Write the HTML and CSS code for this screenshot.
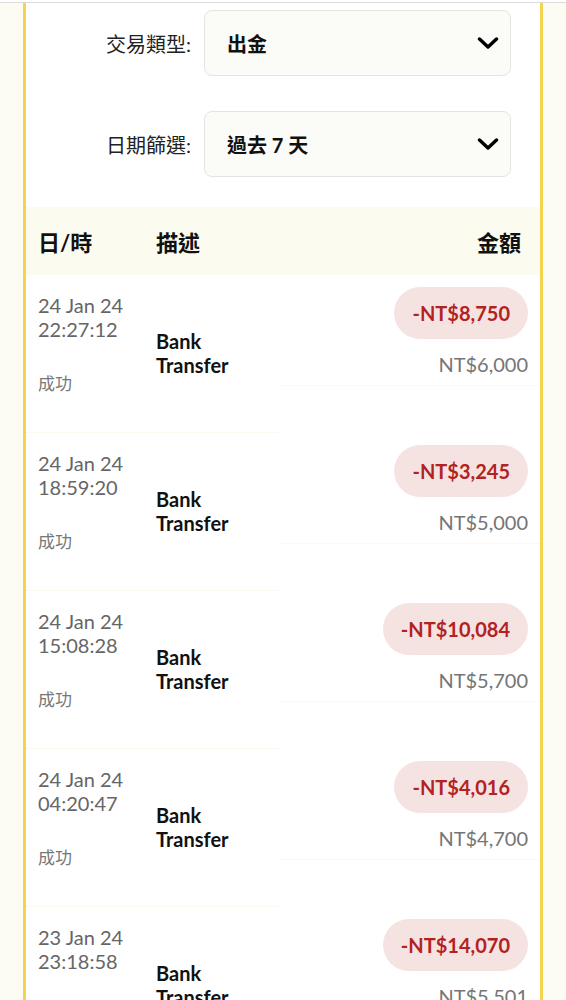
FILE: index.html
```html
<!DOCTYPE html>
<html lang="zh-Hant">
<head>
<meta charset="utf-8">
<title>交易紀錄</title>
<link rel="stylesheet" href="styles.css">
</head>
<body>
<div class="topbar"></div>
<main class="card">
  <section class="filters">
    <div class="filter">
      <label class="filter-label">交易類型:</label>
      <div class="select">
        <span class="select-value">出金</span>
        <svg class="chev" width="22" height="12" viewBox="0 0 22 12"><path d="M2.5 2 L11 10 L19.5 2" fill="none" stroke="#000" stroke-width="3.4" stroke-linecap="round" stroke-linejoin="round"/></svg>
      </div>
    </div>
    <div class="filter">
      <label class="filter-label">日期篩選:</label>
      <div class="select">
        <span class="select-value">過去 7 天</span>
        <svg class="chev" width="22" height="12" viewBox="0 0 22 12"><path d="M2.5 2 L11 10 L19.5 2" fill="none" stroke="#000" stroke-width="3.4" stroke-linecap="round" stroke-linejoin="round"/></svg>
      </div>
    </div>
  </section>

  <div class="thead">
    <span class="th th-date">日/時</span>
    <span class="th th-desc">描述</span>
    <span class="th th-amt">金額</span>
  </div>

  <div class="row">
    <div class="c-date"><div class="dt">24 Jan 24<br>22:27:12</div><div class="status">成功</div></div>
    <div class="c-desc">Bank<br>Transfer</div>
    <div class="c-amt"><span class="badge">-NT$8,750</span><span class="bal">NT$6,000</span></div>
  </div>
  <div class="row">
    <div class="c-date"><div class="dt">24 Jan 24<br>18:59:20</div><div class="status">成功</div></div>
    <div class="c-desc">Bank<br>Transfer</div>
    <div class="c-amt"><span class="badge">-NT$3,245</span><span class="bal">NT$5,000</span></div>
  </div>
  <div class="row">
    <div class="c-date"><div class="dt">24 Jan 24<br>15:08:28</div><div class="status">成功</div></div>
    <div class="c-desc">Bank<br>Transfer</div>
    <div class="c-amt"><span class="badge">-NT$10,084</span><span class="bal">NT$5,700</span></div>
  </div>
  <div class="row">
    <div class="c-date"><div class="dt">24 Jan 24<br>04:20:47</div><div class="status">成功</div></div>
    <div class="c-desc">Bank<br>Transfer</div>
    <div class="c-amt"><span class="badge">-NT$4,016</span><span class="bal">NT$4,700</span></div>
  </div>
  <div class="row">
    <div class="c-date"><div class="dt">23 Jan 24<br>23:18:58</div><div class="status">成功</div></div>
    <div class="c-desc">Bank<br>Transfer</div>
    <div class="c-amt"><span class="badge">-NT$14,070</span><span class="bal">NT$5,501</span></div>
  </div>
</main>
</body>
</html>
```

FILE: styles.css
```css
* { box-sizing: border-box; }

html, body {
  margin: 0;
  padding: 0;
}

body {
  background: #fdfcf2;
  font-family: Lato, "Noto Sans CJK TC", sans-serif;
  color: #111;
  overflow: hidden;
}

.topbar {
  height: 3px;
  background: #ffffff;
  border-bottom: 1px solid #dcdcdc;
}

.card {
  margin: 0 23px;
  background: #ffffff;
  border-left: 3px solid #f6d34c;
  border-right: 3px solid #f6d34c;
  padding-top: 7px;
}

.filters {
  display: flex;
  flex-direction: column;
  gap: 35px;
  margin-bottom: 30px;
}

.filter {
  display: flex;
  align-items: center;
}

.filter-label {
  width: 165px;
  text-align: right;
  font-size: 20px;
  color: #222;
  margin-right: 13px;
}

.select {
  width: 307px;
  height: 66px;
  border: 1px solid #e4e4e0;
  border-radius: 8px;
  background: #fbfbf7;
  display: flex;
  align-items: center;
  justify-content: space-between;
  padding: 0 11px 0 22px;
}

.select-value {
  font-size: 20px;
  font-weight: 700;
  color: #111;
}

.chev { display: block; }

.thead {
  height: 68px;
  background: #fcfbef;
  display: grid;
  grid-template-columns: 130px 124px 1fr;
  align-items: center;
}

.th {
  font-size: 22px;
  font-weight: 700;
  color: #111;
}

.th-date { padding-left: 12px; }
.th-amt { text-align: right; padding-right: 19px; }

.row {
  display: grid;
  grid-template-columns: 130px 124px 1fr;
}

.c-date {
  padding: 18px 0 36px 12px;
  border-bottom: 1px solid #fcfaee;
}

.dt {
  font-size: 20px;
  line-height: 24px;
  color: #666;
}

.status {
  margin-top: 31px;
  font-size: 17px;
  line-height: 24px;
  color: #777;
}

.c-desc {
  display: flex;
  align-items: center;
  padding-bottom: 1px;
  font-size: 20px;
  line-height: 24px;
  font-weight: 700;
  color: #111;
  border-bottom: 1px solid #fcfaee;
}

.c-amt {
  align-self: start;
  display: flex;
  flex-direction: column;
  align-items: flex-end;
  padding: 12px 12px 9px 0;
  border-bottom: 1px solid #fcfaee;
}

.badge {
  display: inline-block;
  padding: 14px 18px;
  line-height: 24px;
  border-radius: 26px;
  background: #f5e3e2;
  color: #b2221f;
  font-size: 20px;
  font-weight: 700;
}

.bal {
  margin-top: 13px;
  font-size: 20px;
  line-height: 24px;
  color: #757575;
}
```
